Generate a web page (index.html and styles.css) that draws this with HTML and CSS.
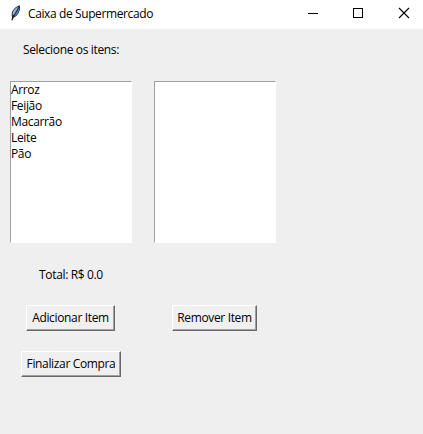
FILE: index.html
```html
<!DOCTYPE html>
<html lang="pt-BR">
<head>
<meta charset="utf-8">
<title>Caixa de Supermercado</title>
<link rel="stylesheet" href="styles.css">
</head>
<body>
<header class="titlebar">
  <svg class="feather" width="16" height="20" viewBox="0 0 16 20">
    <path d="M4.500 17.500 5 14C3.800 10 6 4.500 12.600 2.200 14.200 6.500 11.500 12.500 6.500 14.800L5.500 17.500Z" fill="#182334"/>
    <path d="M5.600 12.500C5.200 9 7.500 5.200 11.600 3.600L7.500 11Z" fill="#8fb6dc"/>
    <path d="M12.300 4.200C12.800 8 10.500 12 7.200 13.500L8.800 10.500Z" fill="#5580ad"/>
  </svg>
  <h1 class="title">Caixa de Supermercado</h1>
  <div class="controls">
    <svg width="45" height="29" viewBox="0 0 45 29" shape-rendering="crispEdges"><path d="M17 13.500H27" stroke="#000"/></svg>
    <svg width="45" height="29" viewBox="0 0 45 29" shape-rendering="crispEdges"><path d="M17.500 8.500H26.500V17.500H17.500Z" fill="none" stroke="#000"/></svg>
    <svg width="45" height="29" viewBox="0 0 45 29"><path d="M18 8 28 18M28 8 18 18" stroke="#000" stroke-width="1.1"/></svg>
  </div>
</header>
<main class="form">
  <div class="label prompt">Selecione os itens:</div>
  <ul class="listbox items">
    <li>Arroz</li>
    <li>Feijão</li>
    <li>Macarrão</li>
    <li>Leite</li>
    <li>Pão</li>
  </ul>
  <ul class="listbox cart"></ul>
  <div class="label total">Total: R$ 0.0</div>
  <button class="button add">Adicionar Item</button>
  <button class="button remove">Remover Item</button>
  <button class="button finish">Finalizar Compra</button>
</main>
</body>
</html>
```
FILE: styles.css
```css
* { box-sizing: border-box; }
body {
  margin: 0;
  height: 434px;
  overflow: hidden;
  background: #efefef;
  color: #000;
  font: 12px/16px "Open Sans", "Noto Sans", sans-serif;
  letter-spacing: -0.35px;
  white-space: nowrap;
}
.titlebar {
  display: flex;
  height: 29px;
  padding-left: 7px;
  background: #fff;
}
.feather { margin-top: 3px; }
.title {
  margin: 6px 0 0 5px;
  font-size: 12px;
  font-weight: 400;
  letter-spacing: -0.39px;
}
.controls { display: flex; margin-left: auto; margin-right: -3px; }
.controls svg { flex: none; }
.form {
  display: grid;
  grid-template-columns: 142px 142px;
  grid-template-rows: 42px 182px 42px 46px 46px;
  column-gap: 2px;
  place-items: center;
}
.prompt, .total, .items, .add, .finish { grid-column: 1; }
.cart, .remove { grid-column: 2; }
.items, .cart { grid-row: 2; }
.total { grid-row: 3; padding-top: 2px; }
.add, .remove { grid-row: 4; }
.finish { grid-row: 5; }
.listbox {
  width: 122px;
  height: 162px;
  margin: 0;
  padding: 0;
  list-style: none;
  background: #fff;
  border: 1px solid #fff;
  border-top-color: #a0a0a0;
  border-left-color: #a0a0a0;
}
.button {
  height: 26px;
  padding: 0;
  background: #f0f0f0;
  border: 1px solid;
  border-color: #fff #696969 #696969 #fff;
  box-shadow: inset -1px -1px #a0a0a0;
  color: inherit;
  font: inherit;
  letter-spacing: inherit;
}
.add { width: 89px; margin-right: 1px; }
.remove { width: 85px; margin-right: 1px; }
.finish { width: 100px; }
```
